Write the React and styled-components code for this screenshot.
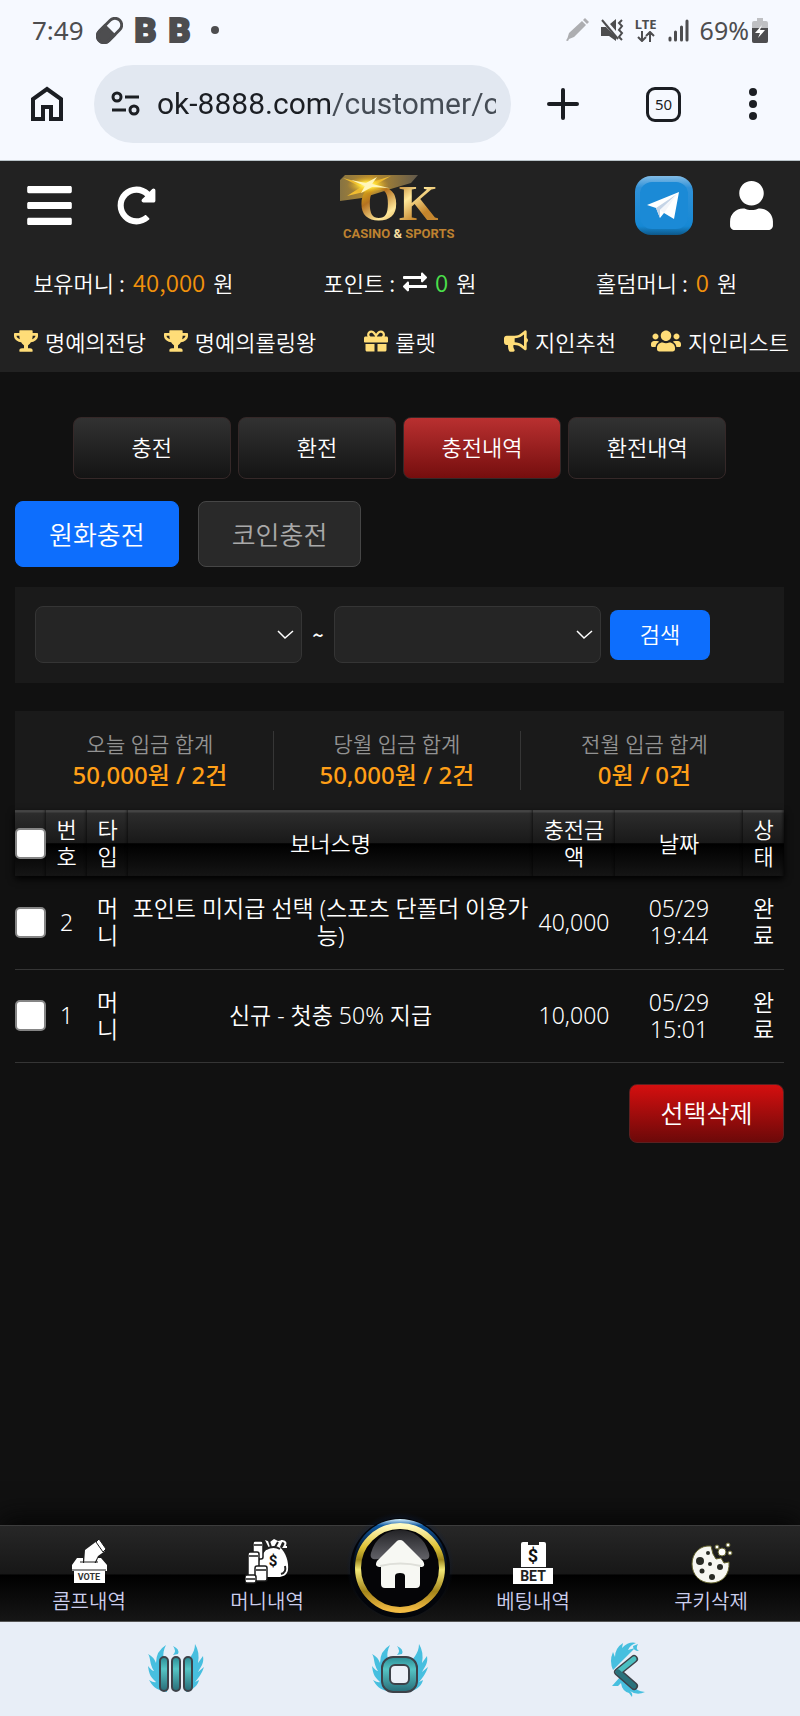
import React from 'react';
import styled, { createGlobalStyle, css } from 'styled-components';
import { FaBars, FaRedoAlt, FaUser, FaTrophy, FaGift, FaBullhorn, FaUsers, FaExchangeAlt } from 'react-icons/fa';

const GlobalStyle = createGlobalStyle`
  *, *::before, *::after { box-sizing: border-box; }
  body {
    margin: 0;
    background: #111;
    color: #fff;
    font-family: 'Noto Sans CJK KR', 'Noto Sans', sans-serif;
    font-size: 22px;
    font-weight: 350;
  }
  button, input, select { font: inherit; color: inherit; margin: 0; padding: 0; border: 0; background: none; }
  button { cursor: pointer; }
  a { color: inherit; text-decoration: none; }
  svg { display: block; flex: none; }
`;

const Page = styled.div`
  min-height: 100vh;
  display: flex;
  flex-direction: column;
`;

/* ---------- phone status bar and browser bar ---------- */

const Chrome = styled.div`
  background: #f6f9ff;
  color: #1b1e23;
  border-bottom: 1px solid #b9c3c9;
`;

const StatusBar = styled.div`
  display: flex;
  justify-content: space-between;
  align-items: center;
  height: 60px;
  padding: 0 32px;
  color: #4d4d4f;
  font-family: 'Noto Sans', sans-serif;
  font-weight: 400;
`;

const StatusGroup = styled.div`
  display: flex;
  align-items: center;
  gap: ${p => p.$gap}px;
`;

const Clock = styled.span`
  font-size: 26px;
`;

const Bullet = styled.span`
  width: 8px;
  height: 8px;
  margin-left: 8px;
  border-radius: 50%;
  background: #4d4d4f;
`;

const Battery = styled.span`
  display: flex;
  align-items: center;
  gap: 3px;
  font-size: 25px;
`;

const AppBadge = styled.span`
  font-family: Roboto, sans-serif;
  font-size: 34px;
  font-weight: 900;
  line-height: 34px;
  -webkit-text-stroke: 2px #4d4d4f;
`;

const Network = styled.span`
  display: flex;
  flex-direction: column;
  align-items: center;
  font-size: 13px;
  font-weight: 700;
  line-height: 13px;
`;

const BrowserBar = styled.div`
  display: flex;
  align-items: center;
  padding: 5px 30px 17px;
`;

const AddressBox = styled.label`
  flex: 1;
  min-width: 0;
  display: flex;
  align-items: center;
  gap: 17px;
  height: 78px;
  margin: 0 36px 0 30px;
  padding: 0 15px 0 17px;
  border-radius: 39px;
  background: #e2e8f1;
`;

const AddressInput = styled.input`
  flex: 1;
  min-width: 0;
  font-family: Roboto, sans-serif;
  font-size: 30px;
  font-weight: 400;
  line-height: 40px;
  outline: none;
  color: transparent;
  background: linear-gradient(90deg, #1b1e23 175px, #454c55 175px);
  background-clip: text;
  -webkit-background-clip: text;
`;

const BarActions = styled.div`
  flex: none;
  display: flex;
  align-items: center;
  justify-content: space-between;
  width: 223px;
  padding-right: 12px;
`;

const TabCount = styled.button`
  width: 35px;
  height: 35px;
  border: 3px solid #1b1e23;
  border-radius: 9px;
  font-family: 'Noto Sans', sans-serif;
  font-size: 15px;
  font-weight: 400;
  line-height: 28px;
`;

const IconButton = styled.button`
  display: flex;
  font-size: ${p => p.$size || 32}px;
`;

/* ---------- site header ---------- */

const SiteHeader = styled.header`
  background: #222;
  padding: 13px 0 15px;
`;

const HeaderTop = styled.div`
  display: grid;
  grid-template-columns: 1fr auto 1fr;
  padding: 0 24px;
`;

const HeaderSide = styled.div`
  display: flex;
  height: 62px;
  align-items: center;
  gap: ${p => p.$gap}px;
  justify-content: ${p => (p.$end ? 'flex-end' : 'flex-start')};
`;

const Balances = styled.div`
  display: grid;
  grid-template-columns: repeat(3, 1fr);
  margin-top: 24px;
`;

const Balance = styled.div`
  display: flex;
  justify-content: center;
  align-items: center;
  gap: 8px;
  line-height: 32px;
`;

const Amount = styled.span`
  color: ${p => (p.$green ? '#4be04b' : '#f2920c')};
  font-size: 24px;
`;

const QuickLinks = styled.nav`
  display: grid;
  grid-template-columns: repeat(5, 1fr);
  margin-top: 27px;
`;

const QuickLink = styled.a`
  display: flex;
  justify-content: center;
  align-items: center;
  gap: 7px;
  white-space: nowrap;
  line-height: 32px;
  svg { color: #ffdd78; font-size: 24px; }
`;

/* The people glyph is wider than the others, so its box is too. */
const PeopleIcon = styled(FaUsers)`
  && { width: 30px; }
`;

/* ---------- main content ---------- */

const Main = styled.main`
  flex: 1;
  padding: 45px 16px 0 15px;
`;

const Tabs = styled.nav`
  display: grid;
  grid-template-columns: repeat(4, 1fr);
  gap: 7px;
  width: 85%;
  margin: 0 auto;
`;

const TabButton = styled.button`
  height: 62px;
  border: 1px solid #352828;
  border-radius: 8px;
  line-height: 32px;
  padding-bottom: 4px;
  background: ${p => (p.$active
    ? 'linear-gradient(#b93030, #750e0e)'
    : 'linear-gradient(#323232, #141414)')};
`;

const Methods = styled.div`
  display: flex;
  gap: 19px;
  margin-top: 22px;
`;

const Method = styled.button`
  height: 66px;
  padding: 0 33px 2px;
  border: 1px solid #464646;
  border-radius: 8px;
  background: #292929;
  color: #a9a9a9;
  font-size: 26px;
  ${p => p.$active && css`
    border-color: #0d6efd;
    background: #0d6efd;
    color: #fff;
  `}
`;

const FilterPanel = styled.form`
  display: flex;
  align-items: center;
  margin-top: 20px;
  padding: 19px 20px 20px;
  background: #1a1a1a;
`;

const SelectBox = styled.span`
  display: grid;
  align-items: center;
  flex: 0 1 267px;
  > * { grid-area: 1 / 1; }
  svg { justify-self: end; margin-right: 8px; pointer-events: none; }
`;

const Select = styled.select`
  appearance: none;
  width: 100%;
  height: 57px;
  border: 1px solid #353535;
  border-radius: 8px;
  background: #252525;
`;

const Tilde = styled.span`
  width: 32px;
  text-align: center;
  font-size: 20px;
  font-weight: 500;
`;

const SearchButton = styled.button`
  width: 100px;
  height: 50px;
  margin-left: 9px;
  padding-bottom: 3px;
  border-radius: 8px;
  background: #0d6efd;
`;

const Summary = styled.section`
  display: grid;
  grid-template-columns: repeat(3, 1fr);
  margin-top: 28px;
  padding: 20px 16px 20px 12px;
  background: #1a1a1a;
  font-family: 'Noto Sans', 'Noto Sans CJK KR', sans-serif;
`;

const SummaryItem = styled.div`
  display: flex;
  flex-direction: column;
  align-items: center;
  height: 59px;
  border-right: 1px solid #363636;
  &:last-child { border-right: 0; }
`;

const SummaryLabel = styled.span`
  color: #929292;
  font-size: 21px;
  line-height: 26px;
`;

const SummaryValue = styled.strong`
  color: #ff9f17;
  font-size: 24px;
  font-weight: 500;
  line-height: 36px;
`;

const Table = styled.table`
  width: 100%;
  table-layout: fixed;
  border-collapse: collapse;
  font-family: 'Noto Sans', 'Noto Sans CJK KR', sans-serif;
  font-size: 22px;
  line-height: 27px;
  text-align: center;
  thead {
    background: linear-gradient(#444 0, #444 2px, #2c2c2c 3px, #191919 50%, #000 51%, #151515 100%);
    box-shadow: 0 3px 7px #000;
  }
  tbody { font-size: 23px; }
`;

const Col = styled.col`
  width: ${p => p.$w};
`;

const Th = styled.th`
  height: 66px;
  padding: 0 8px;
  font-weight: 350;
  word-break: break-all;
  box-shadow: inset -3px 0 3px -2px rgba(0, 0, 0, 0.6);
`;

const Td = styled.td`
  height: 93px;
  padding: 0 ${p => p.$pad ?? 8}px;
  border-bottom: 1px solid #353535;
  word-break: ${p => (p.$keep ? 'normal' : 'break-all')};
`;

const CheckCell = styled.div`
  display: flex;
  margin: 0 -8px;
`;

const Check = styled.input`
  appearance: none;
  width: 31px;
  height: 31px;
  border: 2px solid #858585;
  border-radius: 5px;
  background: #fff;
  &:checked { background: #0d6efd; }
`;

const TableActions = styled.div`
  display: flex;
  justify-content: flex-end;
  margin-top: 21px;
`;

const DeleteButton = styled.button`
  width: 155px;
  height: 59px;
  padding-bottom: 2px;
  border: 1px solid #5c2020;
  border-radius: 8px;
  background: linear-gradient(#d50f0f, #6c0909);
  font-size: 25px;
`;

/* ---------- bottom bars ---------- */

const BottomNav = styled.nav`
  display: grid;
  grid-template-columns: 1fr 1fr 88px 1fr 1fr;
  height: 97px;
  border-top: 1px solid #3c3c3c;
  border-bottom: 1px solid #555;
  background: linear-gradient(#272727, #171717 50%, #000 52%, #161616);
  box-shadow: 0 -8px 24px #060606;
`;

const NavItem = styled.a`
  display: flex;
  flex-direction: column;
  align-items: center;
  gap: 2px;
  padding-top: 12px;
  color: #ccceed;
  font-size: 20px;
  line-height: 30px;
`;

const HomeLink = styled.a`
  display: flex;
  justify-content: center;
  margin: -14px -12px;
`;

const SystemBar = styled.div`
  display: flex;
  justify-content: center;
  align-items: center;
  gap: 166px;
  height: 94px;
  background: #e8eef7;
`;

/* ---------- drawings ---------- */

const PillIcon = () => (
  <svg width="27" height="27" viewBox="0 0 28 28" fill="none" stroke="#4d4d4f" strokeWidth="3">
    <g transform="rotate(-45 14 14)">
      <rect x="-1" y="7" width="30" height="14" rx="7" />
      <path d="M14 7H6a7 7 0 0 0 0 14h8z" fill="#4d4d4f" />
    </g>
  </svg>
);

const PencilIcon = () => (
  <svg width="24" height="24" viewBox="0 0 24 24" fill="#adaeb1">
    <path d="M17 3l4 4L9 19l-5 2-1 2-2-.500L2.500 20 4 15zM18 2l2-2 4 4-2 2z" />
  </svg>
);

const MuteIcon = () => (
  <svg width="24" height="24" viewBox="0 0 24 24" fill="#4d4d4f">
    <path d="M1 9h5l10 10v4l-7-5H1zM10 6l6-5v12z" />
    <path d="M2 2l16 19" stroke="#4d4d4f" strokeWidth="2" />
    <path d="M22 2l-3 3 3 3-3 4 3 3-3 4 3 3" fill="none" stroke="#4d4d4f" strokeWidth="2" />
  </svg>
);

const DataArrows = () => (
  <svg width="18" height="11" viewBox="0 0 18 11" fill="none" stroke="#4d4d4f" strokeWidth="2">
    <path d="M5 0v9M1 6l4 4 4-4M13 11V2M9 5l4-4 4 4" />
  </svg>
);

const SignalIcon = () => (
  <svg width="21" height="23" viewBox="0 0 21 23" stroke="#4d4d4f" strokeWidth="3" strokeLinecap="round">
    <path d="M2 19v2M7.500 13v8M13.500 8v13M19 2v19" />
  </svg>
);

const BatteryIcon = () => (
  <svg width="16" height="25" viewBox="0 0 16 25">
    <path d="M5 0h6v3h3q2 0 2 2v18q0 2-2 2H2q-2 0-2-2V5q0-2 2-2h3z" fill="#bfc0c3" />
    <path d="M0 10h16v13q0 2-2 2H2q-2 0-2-2z" fill="#4d4d4f" />
    <path d="M10 7l-7 8h5l-2 5 7-8H8z" fill="#fff" />
  </svg>
);

const OutlineHome = () => (
  <svg width="34" height="36" viewBox="0 0 34 36" fill="none" stroke="#1b1e23" strokeWidth="4">
    <path d="M3 33V13L17 3l14 10v20H21V21h-8v12z" />
  </svg>
);

const TuneIcon = () => (
  <svg width="29" height="26" viewBox="0 0 29 26" fill="none" stroke="#1b1e23" strokeWidth="3">
    <circle cx="6" cy="6" r="4" />
    <circle cx="23" cy="19" r="4" />
    <path d="M14 6h14M1 19h14" />
  </svg>
);

const PlusIcon = () => (
  <svg width="32" height="32" viewBox="0 0 32 32" stroke="#1b1e23" strokeWidth="4" strokeLinecap="round">
    <path d="M16 2v28M2 16h28" />
  </svg>
);

const DotsIcon = () => (
  <svg width="10" height="32" viewBox="0 0 10 32" fill="#1b1e23">
    <circle cx="5" cy="4" r="4" /><circle cx="5" cy="16" r="4" /><circle cx="5" cy="28" r="4" />
  </svg>
);

const Logo = () => (
  <svg width="120" height="68" viewBox="0 0 120 68">
    <defs>
      <linearGradient id="gold" x1="0" y1="0" x2="1" y2="1">
        <stop offset="0" stopColor="#ffe60a" />
        <stop offset=".3" stopColor="#b57220" />
        <stop offset=".52" stopColor="#ffe89a" />
        <stop offset=".75" stopColor="#c4842b" />
        <stop offset="1" stopColor="#c98c36" />
      </linearGradient>
      <linearGradient id="haze">
        <stop offset="0" stopColor="#877342" />
        <stop offset=".4" stopColor="#b98d2d" />
        <stop offset="1" stopColor="#61594c" />
      </linearGradient>
      <radialGradient id="spark">
        <stop offset="0" stopColor="#fff" />
        <stop offset=".35" stopColor="#ffe13a" />
        <stop offset="1" stopColor="#d69a20" stopOpacity="0" />
      </radialGradient>
    </defs>
    <path d="M0 6L5 1H78l-7 8-17 5-32 10-22 3z" fill="url(#haze)" />
    <path d="M3 4l23 6L51 2 35 11l15 4-18 1L7 22l14-9z" fill="#f1bd30" />
    <text x="19" y="46" fontFamily="'Liberation Serif', serif" fontWeight="700" fontSize="51" fill="url(#gold)">OK</text>
    <ellipse cx="28" cy="11" rx="21" ry="9" fill="url(#spark)" />
    <path d="M11 6l15 3 11-6-5 7 17 4-17-1-11 6 4-7z" fill="#fff6ba" />
    <text x="3" y="64" fontFamily="Roboto, sans-serif" fontWeight="700" fontSize="13" fill="#bd8130">
      CASINO <tspan fill="#f6dea0">&amp;</tspan> SPORTS
    </text>
  </svg>
);

const TelegramIcon = () => (
  <svg width="58" height="59" viewBox="0 0 58 59">
    <defs>
      <linearGradient id="tg" x1="0" y1="0" x2="0" y2="1">
        <stop offset="0" stopColor="#82bce6" />
        <stop offset=".2" stopColor="#2f91d8" />
        <stop offset=".85" stopColor="#1688d4" />
        <stop offset="1" stopColor="#0d5889" />
      </linearGradient>
    </defs>
    <rect width="58" height="59" rx="16" fill="url(#tg)" />
    <rect x="5" y="6" width="48" height="47" rx="12" fill="#1b8ad6" />
    <path d="M12 29l32-13-5 27-10-6-4 5-4-10z" fill="#fff" />
    <path d="M21 32l21-14-17 16v8z" fill="#c5d4e6" />
    <path d="M25 34l17-16-13 19z" fill="#f4f6fa" />
  </svg>
);

const Chevron = () => (
  <svg width="17" height="10" viewBox="0 0 17 10" fill="none" stroke="#fff" strokeWidth="1.500">
    <path d="M1 1l7 7 8-7" />
  </svg>
);

const VoteIcon = () => (
  <svg width="38" height="46" viewBox="0 0 38 46" fill="#fff">
    <path d="M15 12l12-9 8 10-7 5-4 8H14z" />
    <path d="M26 4l3-3 7 10-3 3z" stroke="#1c1c1c" strokeWidth="1" />
    <path d="M7 20h6v5h13l2-5h3l6 7v6H2v-6z" />
    <path d="M4 31h31v14H4z" />
    <path d="M2 32h34M10 24h18" stroke="#222" strokeWidth="1" />
    <text x="19" y="42" textAnchor="middle" fontFamily="Roboto, sans-serif" fontSize="9" fontWeight="700" fill="#333">VOTE</text>
  </svg>
);

const MoneyIcon = () => (
  <svg width="44" height="46" viewBox="0 0 44 46" fill="#fff">
    <path d="M20 2l5 2 4-3 4 2 5-1-3 7c6 6 9 15 8 23-1 5-5 7-10 7H19c-7-2-7-9-5-15 2-6 5-11 10-14z" />
    <path d="M21 11q8-4 14 0M24 3l2 6m7-5-3 5M36 36c4-1 5-4 4-8" fill="none" stroke="#222" strokeWidth="2" />
    <path d="M36 3q7 0 3 6h3" fill="none" stroke="#fff" strokeWidth="2" />
    <g stroke="#1b1b1b" strokeWidth="1.500">
      <rect x="8" y="3" width="10" height="18" rx="2" />
      <rect x="3" y="14" width="11" height="28" rx="2" />
      <rect x="10" y="28" width="12" height="15" rx="2" />
      <rect x="0" y="37" width="11" height="8" rx="2" />
    </g>
    <path d="M9 7h8M4 18h9M11 32h10M1 41h9" stroke="#1b1b1b" strokeWidth="1.500" />
    <text x="28" y="28" textAnchor="middle" fontFamily="Roboto, sans-serif" fontSize="15" fontWeight="700" fill="#111">$</text>
  </svg>
);

const BetIcon = () => (
  <svg width="40" height="46" viewBox="0 0 40 46">
    <rect x="8" y="4" width="25" height="27" rx="2" fill="#fff" />
    <path d="M15 4h11v3H15zM8 29h25v1H8z" fill="#222" />
    <path d="M0 30h40v16H0z" fill="#fff" />
    <text x="20" y="24" textAnchor="middle" fontFamily="Roboto, sans-serif" fontSize="18" fontWeight="700" fill="#111">$</text>
    <text x="20" y="43" textAnchor="middle" fontFamily="Roboto, sans-serif" fontSize="14" fontWeight="700" fill="#222">BET</text>
  </svg>
);

const CookieIcon = () => (
  <svg width="44" height="46" viewBox="0 0 44 46">
    <path d="M22 8C11 7 3 15 3 26s8 19 19 19 19-8 18-21l-5 1-3-5-5 1-3-5-1-4z" fill="#f7f7f2" stroke="#65642e" strokeWidth="1" />
    <g fill="#292b25">
      <circle cx="11" cy="23" r="4" /><circle cx="19" cy="15" r="2" /><circle cx="31" cy="29" r="3" />
      <circle cx="13" cy="33" r="2.500" /><circle cx="23" cy="39" r="3" /><circle cx="21" cy="26" r="2" />
    </g>
    <g fill="#fff" stroke="#65642e" strokeWidth="1">
      <circle cx="33" cy="14" r="4" /><circle cx="28" cy="9" r="2" /><circle cx="39" cy="7" r="2" /><circle cx="41" cy="15" r="2" />
    </g>
  </svg>
);

const HomeBadge = () => (
  <svg width="112" height="112" viewBox="0 0 112 112">
    <defs>
      <linearGradient id="ring" x1="0" y1="0" x2="0" y2="1">
        <stop offset="0" stopColor="#fffac0" />
        <stop offset=".25" stopColor="#dfc336" />
        <stop offset=".4" stopColor="#9c861c" />
        <stop offset=".52" stopColor="#f2e877" />
        <stop offset=".78" stopColor="#a38419" />
        <stop offset="1" stopColor="#f1ba43" />
      </linearGradient>
      <linearGradient id="blue" x1="0" y1="0" x2="0" y2="1">
        <stop offset="0" stopColor="#d9f4ff" />
        <stop offset=".07" stopColor="#105aa2" />
        <stop offset=".3" stopColor="#051a35" />
        <stop offset=".6" stopColor="#020406" />
      </linearGradient>
      <linearGradient id="gloss" x1="0" y1="0" x2="0" y2="1">
        <stop offset="0" stopColor="#242427" />
        <stop offset="1" stopColor="#626268" />
      </linearGradient>
      <radialGradient id="glow">
        <stop offset=".75" stopColor="#0b2c65" />
        <stop offset="1" stopColor="#0b1b3a" stopOpacity="0" />
      </radialGradient>
    </defs>
    <circle cx="56" cy="54" r="54" fill="url(#glow)" opacity=".6" />
    <circle cx="56" cy="56" r="50" fill="#03050a" />
    <circle cx="56" cy="54" r="47" fill="url(#blue)" />
    <circle cx="56" cy="56" r="42" fill="#050507" stroke="url(#ring)" strokeWidth="6" />
    <path d="M27 41c4-15 16-23 29-23s25 8 29 23c2 8-5 8-12 4H39c-7 4-14 3-12-4z" fill="url(#gloss)" />
    <path d="M56 28q2 0 3 1l20 20q3 5-1 6h-2v17q0 4-4 4H61V64q0-3-5-3t-5 3v12H41q-4 0-4-4V55h-2q-5-1-2-6l20-20q1-1 3-1z" fill="#f7f8f3" />
    <path d="M36 54q20-5 41 0" fill="none" stroke="#dedfd9" strokeWidth="2" />
  </svg>
);

const Flames = () => (
  <g fill="#47bfdf">
    <path d="M20 49C8 47 5 42 2 37q5 3 7 2C2 33 2 29 1 23q4 5 6 5C2 20 4 15 1 11q6 3 8 9 0-12 10-18c-5 10-2 15 1 21z" />
    <path d="M39 49c8-3 12-7 13-12l-4 2c5-6 7-9 9-15l-6 5c4-7 6-9 5-16l-5 7q2-11-3-19c0 10-7 15-11 22z" />
    <path d="M26 3q7 3 5 8l-5 1q4-4 0-9z" />
  </g>
);

const TealGradient = ({ id }) => (
  <defs>
    <linearGradient id={id} x1="0" y1="0" x2="0" y2="1">
      <stop offset="0" stopColor="#2b8c95" />
      <stop offset=".35" stopColor="#55c5c5" />
      <stop offset="1" stopColor="#286c78" />
    </linearGradient>
  </defs>
);

const RecentsIcon = () => (
  <svg width="58" height="52" viewBox="0 0 58 52">
    <TealGradient id="tealBars" />
    <Flames />
    <g fill="url(#tealBars)" stroke="#3d4249" strokeWidth="2">
      <rect x="13" y="14" width="8" height="34" rx="4" />
      <rect x="25" y="14" width="8" height="34" rx="4" />
      <rect x="37" y="14" width="8" height="34" rx="4" />
    </g>
  </svg>
);

const SystemHomeIcon = () => (
  <svg width="58" height="52" viewBox="0 0 58 52">
    <TealGradient id="tealSquare" />
    <Flames />
    <rect x="11" y="14" width="35" height="35" rx="11" fill="url(#tealSquare)" stroke="#3d4249" strokeWidth="2" />
    <rect x="19" y="22" width="19" height="19" rx="5" fill="#edf1f8" stroke="#3d4249" strokeWidth="2" />
  </svg>
);

const BackIcon = () => (
  <svg width="58" height="56" viewBox="-6 0 58 56">
    <g fill="#47bfdf">
      <path d="M12 29Q8 20 12 11l2 5q0-9 8-14l-1 5Q28 0 35 2q-6 2-8 7l7-2-16 16z" />
      <path d="M32 5l5-2q-3 5 1 7-6 0-6-5zM19 36l-8 9h6l3-3q1 8 8 10l3 4q1-4-2-6 7 5 15 1-9-1-14-8z" />
    </g>
    <path d="M33 18L17 31l16 14" fill="none" stroke="#3d4249" strokeWidth="8" strokeLinecap="round" strokeLinejoin="round" />
    <path d="M33 18L17 31" stroke="#4abfc0" strokeWidth="5" strokeLinecap="round" />
    <path d="M17 31l16 14" stroke="#2a727c" strokeWidth="5" strokeLinecap="round" />
  </svg>
);

/* ---------- data ---------- */

const tabs = ['충전', '환전', '충전내역', '환전내역'];

const quickLinks = [
  { label: '명예의전당', Icon: FaTrophy },
  { label: '명예의롤링왕', Icon: FaTrophy },
  { label: '룰렛', Icon: FaGift },
  { label: '지인추천', Icon: FaBullhorn },
  { label: '지인리스트', Icon: PeopleIcon },
];

const totals = [
  { label: '오늘 입금 합계', value: '50,000원 / 2건' },
  { label: '당월 입금 합계', value: '50,000원 / 2건' },
  { label: '전월 입금 합계', value: '0원 / 0건' },
];

const columns = ['번호', '타입', '보너스명', '충전금액', '날짜', '상태'];

const rows = [
  { no: 2, bonus: '포인트 미지급 선택 (스포츠 단폴더 이용가능)', amount: '40,000', date: '05/29', time: '19:44' },
  { no: 1, bonus: '신규 - 첫충 50% 지급', amount: '10,000', date: '05/29', time: '15:01' },
];

const DateSelect = ({ label }) => (
  <SelectBox>
    <Select aria-label={label} defaultValue=""><option value="" /></Select>
    <Chevron />
  </SelectBox>
);

export default function App() {
  return (
    <Page>
      <GlobalStyle />
      <Chrome>
        <StatusBar>
          <StatusGroup $gap={12}>
            <Clock>7:49</Clock>
            <PillIcon />
            <AppBadge>B</AppBadge>
            <AppBadge>B</AppBadge>
            <Bullet />
          </StatusGroup>
          <StatusGroup $gap={11}>
            <PencilIcon />
            <MuteIcon />
            <Network>LTE<DataArrows /></Network>
            <SignalIcon />
            <Battery>69%<BatteryIcon /></Battery>
          </StatusGroup>
        </StatusBar>
        <BrowserBar>
          <IconButton aria-label="Home"><OutlineHome /></IconButton>
          <AddressBox>
            <TuneIcon />
            <AddressInput aria-label="Address" defaultValue="ok-8888.com/customer/c" />
          </AddressBox>
          <BarActions>
            <IconButton aria-label="New tab"><PlusIcon /></IconButton>
            <TabCount>50</TabCount>
            <IconButton aria-label="More"><DotsIcon /></IconButton>
          </BarActions>
        </BrowserBar>
      </Chrome>

      <SiteHeader>
        <HeaderTop>
          <HeaderSide $gap={42}>
            <IconButton aria-label="메뉴" $size={51}><FaBars /></IconButton>
            <IconButton aria-label="새로고침" $size={39}><FaRedoAlt /></IconButton>
          </HeaderSide>
          <a href="#home" aria-label="OK Casino & Sports"><Logo /></a>
          <HeaderSide $end $gap={34}>
            <a href="#telegram" aria-label="Telegram"><TelegramIcon /></a>
            <IconButton aria-label="내 정보" $size={49}><FaUser /></IconButton>
          </HeaderSide>
        </HeaderTop>
        <Balances>
          <Balance>보유머니 : <Amount>40,000</Amount> 원</Balance>
          <Balance>포인트 : <FaExchangeAlt size={24} /> <Amount $green>0</Amount> 원</Balance>
          <Balance>홀덤머니 : <Amount>0</Amount> 원</Balance>
        </Balances>
        <QuickLinks>
          {quickLinks.map(({ label, Icon }) => (
            <QuickLink key={label} href="#link"><Icon />{label}</QuickLink>
          ))}
        </QuickLinks>
      </SiteHeader>

      <Main>
        <Tabs>
          {tabs.map(t => <TabButton key={t} $active={t === '충전내역'}>{t}</TabButton>)}
        </Tabs>
        <Methods>
          <Method $active>원화충전</Method>
          <Method>코인충전</Method>
        </Methods>
        <FilterPanel>
          <DateSelect label="시작일" />
          <Tilde>~</Tilde>
          <DateSelect label="종료일" />
          <SearchButton type="button">검색</SearchButton>
        </FilterPanel>
        <Summary>
          {totals.map(t => (
            <SummaryItem key={t.label}>
              <SummaryLabel>{t.label}</SummaryLabel>
              <SummaryValue>{t.value}</SummaryValue>
            </SummaryItem>
          ))}
        </Summary>
        <Table>
          <colgroup>
            <Col $w="31px" /><Col $w="41px" /><Col $w="41px" /><Col />
            <Col $w="82px" /><Col $w="128px" /><Col $w="41px" />
          </colgroup>
          <thead>
            <tr>
              <Th><CheckCell><Check type="checkbox" aria-label="전체 선택" /></CheckCell></Th>
              {columns.map(c => <Th key={c}>{c}</Th>)}
            </tr>
          </thead>
          <tbody>
            {rows.map(r => (
              <tr key={r.no}>
                <Td><CheckCell><Check type="checkbox" aria-label={`${r.no}번 선택`} /></CheckCell></Td>
                <Td>{r.no}</Td>
                <Td>머니</Td>
                <Td $pad={2}>{r.bonus}</Td>
                <Td $keep $pad={2}>{r.amount}</Td>
                <Td $keep>{r.date}<br />{r.time}</Td>
                <Td>완료</Td>
              </tr>
            ))}
          </tbody>
        </Table>
        <TableActions><DeleteButton>선택삭제</DeleteButton></TableActions>
      </Main>

      <BottomNav>
        <NavItem href="#comp"><VoteIcon />콤프내역</NavItem>
        <NavItem href="#money"><MoneyIcon />머니내역</NavItem>
        <HomeLink href="#home" aria-label="홈"><HomeBadge /></HomeLink>
        <NavItem href="#bets"><BetIcon />베팅내역</NavItem>
        <NavItem href="#cookies"><CookieIcon />쿠키삭제</NavItem>
      </BottomNav>
      <SystemBar>
        <IconButton aria-label="Recents"><RecentsIcon /></IconButton>
        <IconButton aria-label="Home screen"><SystemHomeIcon /></IconButton>
        <IconButton aria-label="Back"><BackIcon /></IconButton>
      </SystemBar>
    </Page>
  );
}
